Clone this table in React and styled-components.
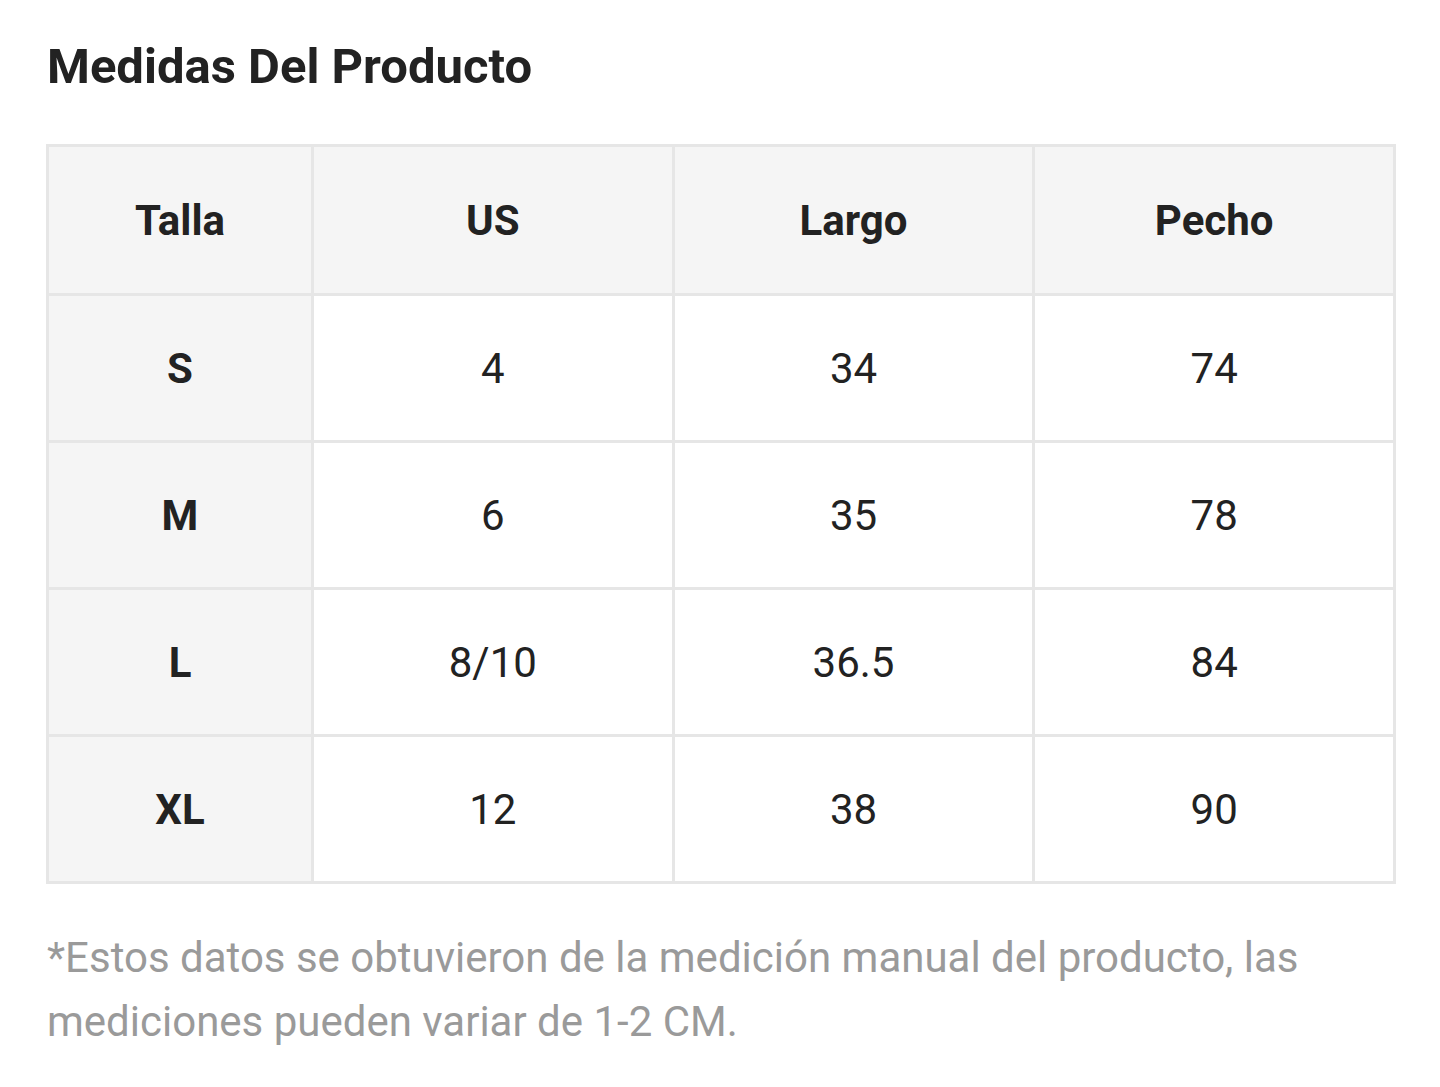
import React from 'react'
import styled, { createGlobalStyle } from 'styled-components'

const GlobalStyle = createGlobalStyle`
  body {
    margin: 0;
    background: #fff;
    font-family: Roboto, 'Liberation Sans', sans-serif;
    color: #222;
  }
`

const Page = styled.div`
  padding: 32px 44px 0 46px;
`

const Title = styled.h2`
  margin: 0 0 0 1px;
  font-size: 49px;
  font-weight: 700;
  line-height: 70px;
  color: #222;
`

const Table = styled.table`
  margin-top: 42px;
  width: 1350px;
  border-collapse: collapse;
  table-layout: fixed;
  border: 3px solid #e6e6e6;
`

const Cell = styled.td`
  border: 3px solid #e6e6e6;
  height: ${(p) => (p.head ? 146 : 144)}px;
  padding: 0;
  text-align: center;
  vertical-align: middle;
  font-size: 42px;
  font-weight: ${(p) => (p.bold ? 700 : 400)};
  background: ${(p) => (p.shade ? '#f5f5f5' : '#fff')};
  color: #222;
`

const Note = styled.p`
  margin: 42px 0 0 1px;
  font-size: 42px;
  line-height: 64px;
  color: #9a9a9a;
`

const columns = ['Talla', 'US', 'Largo', 'Pecho']
const rows = [
  ['S', '4', '34', '74'],
  ['M', '6', '35', '78'],
  ['L', '8/10', '36.5', '84'],
  ['XL', '12', '38', '90'],
]

export default function App() {
  return (
    <>
      <GlobalStyle />
      <Page>
        <Title>Medidas Del Producto</Title>
        <Table>
          <colgroup>
            <col style={{ width: 265 }} />
            <col />
            <col />
            <col />
          </colgroup>
          <thead>
            <tr>
              {columns.map((c) => (
                <Cell as='th' key={c} head bold shade>
                  {c}
                </Cell>
              ))}
            </tr>
          </thead>
          <tbody>
            {rows.map((r) => (
              <tr key={r[0]}>
                {r.map((v, i) => (
                  <Cell key={i} bold={i === 0} shade={i === 0}>
                    {v}
                  </Cell>
                ))}
              </tr>
            ))}
          </tbody>
        </Table>
        <Note>
          *Estos datos se obtuvieron de la medición manual del producto, las
          mediciones pueden variar de 1-2 CM.
        </Note>
      </Page>
    </>
  )
}
